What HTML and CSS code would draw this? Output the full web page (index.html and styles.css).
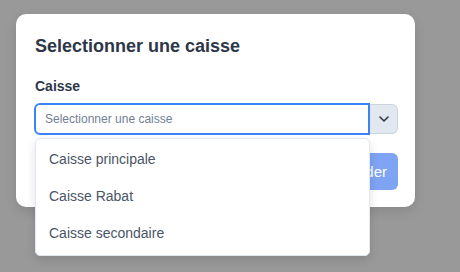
FILE: index.html
```html
<!DOCTYPE html>
<html lang="fr">
<head>
<meta charset="utf-8">
<link rel="stylesheet" href="styles.css">
</head>
<body>
<div class="modal">
  <h2 class="title">Selectionner une caisse</h2>
  <label class="label">Caisse</label>
  <div class="field">
    <div class="group">
      <div class="input">Selectionner une caisse</div>
      <div class="addon">
        <svg width="12" height="8" viewBox="0 0 12 8"><path d="M2 2 L6 6 L10 2" fill="none" stroke="#2d3748" stroke-width="1.6" stroke-linecap="round" stroke-linejoin="round"/></svg>
      </div>
    </div>
    <ul class="menu">
      <li>Caisse principale</li>
      <li>Caisse Rabat</li>
      <li>Caisse secondaire</li>
    </ul>
  </div>
  <div class="footer">
    <button class="btn">Valider</button>
  </div>
</div>
</body>
</html>
```
FILE: styles.css
```css
html, body { margin: 0; height: 100%; }
body {
  background: #999999;
  font-family: "Liberation Sans", Arial, sans-serif;
  padding: 14px 0 0 16px;
  box-sizing: border-box;
}
.modal {
  width: 399px;
  box-sizing: border-box;
  background: #fff;
  border-radius: 10px;
  padding: 20px 17px 17px 18px;
  box-shadow: 0 4px 12px rgba(0,0,0,0.12);
}
.title {
  margin: 0 0 18px 1px;
  font-size: 18px;
  line-height: 24px;
  font-weight: 700;
  color: #2d3748;
}
.label {
  display: block;
  margin-left: 1px;
  font-size: 14px;
  line-height: 20px;
  font-weight: 700;
  color: #2d3748;
  margin-bottom: 7px;
}
.field { position: relative; }
.group { display: flex; align-items: center; }
.input {
  flex: 1;
  height: 32px;
  box-sizing: border-box;
  border: 2px solid #3b82f6;
  border-radius: 6px 0 0 6px;
  padding: 0 9px;
  display: flex;
  align-items: center;
  font-size: 12px;
  color: #718096;
}
.addon {
  width: 28px;
  height: 30px;
  box-sizing: border-box;
  background: #e2e8f0;
  border: 1px solid #cbd5e0;
  border-left: none;
  border-radius: 0 6px 6px 0;
  display: flex;
  align-items: center;
  justify-content: center;
}
.menu {
  position: absolute;
  top: 35px;
  left: 1px;
  width: 335px;
  box-sizing: border-box;
  margin: 0;
  padding: 2px 0 3px;
  list-style: none;
  background: #fff;
  border: 1px solid #e2e8f0;
  border-radius: 5px;
  box-shadow: 0 4px 10px rgba(0,0,0,0.12);
  z-index: 2;
}
.menu li {
  height: 37px;
  line-height: 37px;
  padding-left: 13px;
  font-size: 14px;
  color: #4a5568;
}
.footer {
  display: flex;
  justify-content: flex-end;
  margin-top: 18px;
}
.btn {
  height: 37px;
  padding: 0 11px 0 14px;
  border: none;
  border-radius: 6px;
  background: #7ea4f3;
  color: #fff;
  font-family: "Liberation Sans", Arial, sans-serif;
  font-size: 15px;
  font-weight: 400;
}
```
